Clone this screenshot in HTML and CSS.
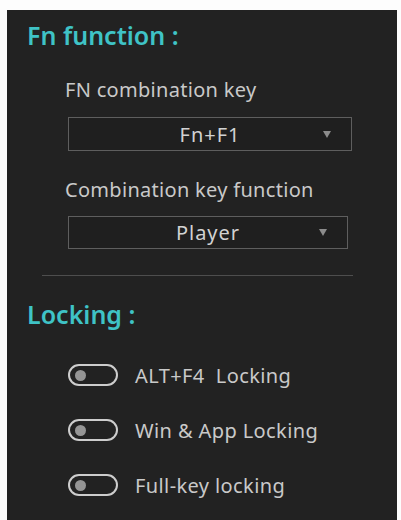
FILE: index.html
```html
<!DOCTYPE html>
<html lang="en">
<head>
  <meta charset="UTF-8">
  <meta name="viewport" content="width=device-width, initial-scale=1.0">
  <title>Keyboard settings</title>
  <link rel="stylesheet" href="styles.css">
</head>
<body>
  <div class="panel">
    <h2 class="heading">Fn function :</h2>

    <div class="field">
      <p class="label">FN combination key</p>
      <div class="select select-wide">
        <span class="select-value">Fn+F1</span>
        <span class="arrow"></span>
      </div>
    </div>

    <div class="field field-second">
      <p class="label">Combination key function</p>
      <div class="select">
        <span class="select-value">Player</span>
        <span class="arrow"></span>
      </div>
    </div>

    <hr class="divider">

    <h2 class="heading heading-lock">Locking :</h2>

    <ul class="locks">
      <li class="lock-row"><span class="toggle"></span>ALT+F4&nbsp; Locking</li>
      <li class="lock-row"><span class="toggle"></span>Win &amp; App Locking</li>
      <li class="lock-row"><span class="toggle"></span>Full-key locking</li>
    </ul>
  </div>
</body>
</html>
```

FILE: styles.css
```css
body {
  margin: 0;
  background: #fdfdfd;
  font-family: "Noto Sans", "Open Sans", sans-serif;
}
.panel {
  margin: 10px 4px 0 7px;
  min-height: 510px;
  background: #222222;
  padding-top: 10px;
  box-sizing: border-box;
}
.heading {
  margin: 0 0 0 20px;
  font-size: 25px;
  line-height: 30px;
  font-weight: 600;
  color: #3fc3c6;
  letter-spacing: 0;
}
.field {
  margin: 28px 0 0 58px;
}
.field-second {
  margin-top: 27px;
}
.label {
  margin: 0;
  font-size: 20px;
  line-height: 24px;
  color: #c9c9c9;
  letter-spacing: 0.3px;
}
.select {
  display: flex;
  align-items: center;
  width: 280px;
  height: 33px;
  margin: 14px 0 0 3px;
  padding: 0 20px 0 28px;
  border: 1px solid #5e5e5e;
  background: #1f1f1f;
  box-sizing: border-box;
}
.select-wide {
  width: 284px;
  height: 34px;
  margin-top: 15px;
}
.select-value {
  flex: 1;
  text-align: center;
  font-size: 20px;
  letter-spacing: 1px;
  color: #d2d2d2;
}
/* small down triangle on the right of each dropdown */
.arrow {
  width: 0;
  height: 0;
  border-left: 4px solid transparent;
  border-right: 4px solid transparent;
  border-top: 7px solid #8c8c8c;
}
.divider {
  width: 311px;
  margin: 26px 0 0 35px;
  border: 0;
  border-top: 1px solid #4e4e4e;
}
.heading-lock {
  margin-top: 23px;
}
.locks {
  list-style: none;
  margin: 31px 0 0 61px;
  padding: 0;
}
.lock-row {
  display: flex;
  align-items: center;
  gap: 17px;
  height: 30px;
  margin-bottom: 25px;
  font-size: 20px;
  letter-spacing: 0.4px;
  color: #c9c9c9;
}
.toggle {
  display: flex;
  align-items: center;
  width: 50px;
  height: 22px;
  padding-left: 5px;
  border: 2px solid #cdcdcd;
  border-radius: 12px;
  box-sizing: border-box;
}
.toggle::before {
  content: "";
  width: 11px;
  height: 11px;
  border-radius: 50%;
  background: #959595;
}
```
